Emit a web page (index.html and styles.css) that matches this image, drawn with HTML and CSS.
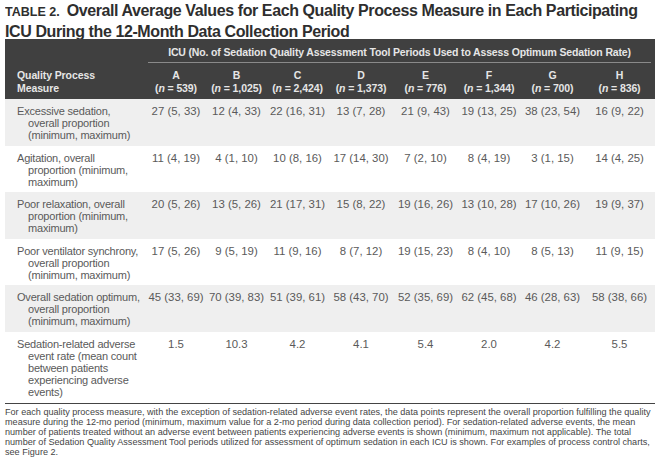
FILE: index.html
```html
<!DOCTYPE html>
<html>
<head>
<meta charset="utf-8">
<link rel="stylesheet" href="styles.css">
</head>
<body>
<div class="page">
  <div class="title">
    <div class="tline"><span class="tlabel">TABLE 2.</span>Overall Average Values for Each Quality Process Measure in Each Participating</div>
    <div class="tline">ICU During the 12-Month Data Collection Period</div>
  </div>
  <table class="data">
    <colgroup>
      <col class="c-label"><col class="c-a"><col class="c-b"><col class="c-c"><col class="c-d"><col class="c-e"><col class="c-f"><col class="c-g"><col class="c-h">
    </colgroup>
    <thead>
      <tr class="h1">
        <th></th>
        <th colspan="8"><div class="span-head">ICU (No. of Sedation Quality Assessment Tool Periods Used to Assess Optimum Sedation Rate)</div></th>
      </tr>
      <tr class="h2">
        <th class="hlabel">Quality Process<br>Measure</th>
        <th>A<br>(<i>n</i> = 539)</th>
        <th>B<br>(<i>n</i> = 1,025)</th>
        <th>C<br>(<i>n</i> = 2,424)</th>
        <th>D<br>(<i>n</i> = 1,373)</th>
        <th>E<br>(<i>n</i> = 776)</th>
        <th>F<br>(<i>n</i> = 1,344)</th>
        <th>G<br>(<i>n</i> = 700)</th>
        <th>H<br>(<i>n</i> = 836)</th>
      </tr>
    </thead>
    <tbody>
      <tr class="shade">
        <td class="label">Excessive sedation,<br>overall proportion<br>(minimum, maximum)</td>
        <td>27 (5, 33)</td><td>12 (4, 33)</td><td>22 (16, 31)</td><td>13 (7, 28)</td><td>21 (9, 43)</td><td>19 (13, 25)</td><td>38 (23, 54)</td><td>16 (9, 22)</td>
      </tr>
      <tr>
        <td class="label">Agitation, overall<br>proportion (minimum,<br>maximum)</td>
        <td>11 (4, 19)</td><td>4 (1, 10)</td><td>10 (8, 16)</td><td>17 (14, 30)</td><td>7 (2, 10)</td><td>8 (4, 19)</td><td>3 (1, 15)</td><td>14 (4, 25)</td>
      </tr>
      <tr class="shade">
        <td class="label">Poor relaxation, overall<br>proportion (minimum,<br>maximum)</td>
        <td>20 (5, 26)</td><td>13 (5, 26)</td><td>21 (17, 31)</td><td>15 (8, 22)</td><td>19 (16, 26)</td><td>13 (10, 28)</td><td>17 (10, 26)</td><td>19 (9, 37)</td>
      </tr>
      <tr>
        <td class="label">Poor ventilator synchrony,<br>overall proportion<br>(minimum, maximum)</td>
        <td>17 (5, 26)</td><td>9 (5, 19)</td><td>11 (9, 16)</td><td>8 (7, 12)</td><td>19 (15, 23)</td><td>8 (4, 10)</td><td>8 (5, 13)</td><td>11 (9, 15)</td>
      </tr>
      <tr class="shade">
        <td class="label">Overall sedation optimum,<br>overall proportion<br>(minimum, maximum)</td>
        <td>45 (33, 69)</td><td>70 (39, 83)</td><td>51 (39, 61)</td><td>58 (43, 70)</td><td>52 (35, 69)</td><td>62 (45, 68)</td><td>46 (28, 63)</td><td>58 (38, 66)</td>
      </tr>
      <tr class="last">
        <td class="label">Sedation-related adverse<br>event rate (mean count<br>between patients<br>experiencing adverse<br>events)</td>
        <td>1.5</td><td>10.3</td><td>4.2</td><td>4.1</td><td>5.4</td><td>2.0</td><td>4.2</td><td>5.5</td>
      </tr>
    </tbody>
  </table>
  <p class="note">For each quality process measure, with the exception of sedation-related adverse event rates, the data points represent the overall proportion fulfilling the quality<br>measure during the 12-mo period (minimum, maximum value for a 2-mo period during data collection period). For sedation-related adverse events, the mean<br>number of patients treated without an adverse event between patients experiencing adverse events is shown (minimum, maximum not applicable). The total<br>number of Sedation Quality Assessment Tool periods utilized for assessment of optimum sedation in each ICU is shown. For examples of process control charts,<br>see Figure 2.</p>
</div>
</body>
</html>
```

FILE: styles.css
```css
html, body {
  margin: 0;
  padding: 0;
  background: #ffffff;
}

.page {
  width: 650px;
  padding-left: 5px;
  font-family: "Liberation Sans", Arial, sans-serif;
}

.title {
  height: 39px;
  padding-top: 0.5px;
  box-sizing: border-box;
  overflow: hidden;
  color: #2e2e2e;
  font-weight: bold;
  font-size: 16px;
  line-height: 20.5px;
  letter-spacing: -0.4px;
  white-space: nowrap;
}

.tlabel {
  font-size: 12.5px;
  letter-spacing: 0;
  margin-right: 7px;
}

.data {
  width: 650px;
  border-collapse: collapse;
  table-layout: fixed;
  border-spacing: 0;
}

.c-label { width: 141px; }
.c-a { width: 60px; }
.c-b { width: 61px; }
.c-c { width: 61px; }
.c-d { width: 66px; }
.c-e { width: 63px; }
.c-f { width: 64px; }
.c-g { width: 63px; }
.c-h { width: 71px; }

.data thead {
  background: #404040;
  color: #e6e6e6;
  font-weight: bold;
  font-size: 10.5px;
  letter-spacing: -0.1px;
}

.data th {
  padding: 0;
  font-weight: bold;
  white-space: nowrap;
  text-align: center;
}

.h1 th {
  padding-top: 7px;
  line-height: 12px;
}

.span-head {
  margin: 0 4px 0 2px;
  padding-bottom: 4px;
  border-bottom: 1px solid #8a8a8a;
  letter-spacing: -0.15px;
}

.h2 th {
  padding: 6px 0 4px;
  line-height: 13px;
}

.h2 th i {
  font-style: italic;
}

.h2 .hlabel {
  text-align: left;
  padding-left: 12px;
}

.data td {
  padding: 6px 0 4.6px;
  line-height: 12px;
  font-size: 11.4px;
  color: #5a5a5a;
  text-align: center;
  vertical-align: top;
  white-space: nowrap;
}

.data td.label {
  text-align: left;
  padding-left: 23px;
  text-indent: -11px;
  font-size: 11px;
  letter-spacing: -0.2px;
}

.data tr.shade td {
  background: #efefef;
}

.data tr.last td {
  border-bottom: 1px solid #444444;
}

.note {
  margin: 0;
  padding-top: 3.5px;
  font-size: 9.1px;
  line-height: 10px;
  color: #454545;
  white-space: nowrap;
}
```
